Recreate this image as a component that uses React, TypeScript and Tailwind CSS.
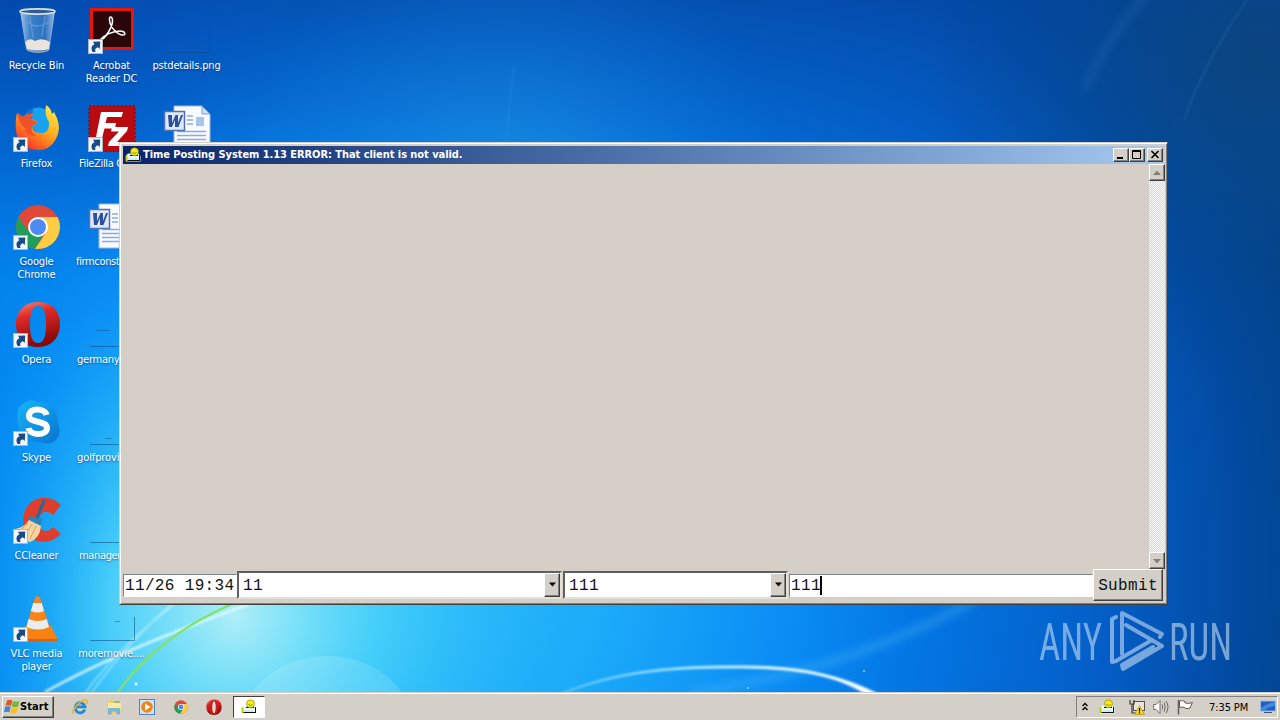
import React from "react";

type KidProps = { children: React.ReactNode };

const Shortcut = () => (
  <svg className="absolute bottom-0 left-0 h-[15px] w-[15px]" viewBox="0 0 15 15">
    <rect x="0.5" y="0.5" width="14" height="14" fill="#f2f6fb" stroke="#a9b8c6" />
    <path d="M4.700 13 C2.500 9.500 3.500 6.500 6.500 5.300 L5 2.800 L12.200 2.600 L11.800 10 L9.900 8.200 C7.500 8.800 6.500 10.500 7.500 13 Z" fill="#174a86" />
  </svg>
);

const RecycleBin = () => (
  <svg className="h-12 w-12" viewBox="0 0 48 48">
    <defs>
      <linearGradient id="bin" x1="0" x2="1">
        <stop offset="0" stopColor="#c7dcef" stopOpacity=".85" />
        <stop offset=".3" stopColor="#4f8fd0" stopOpacity=".75" />
        <stop offset=".7" stopColor="#3b7cc4" stopOpacity=".75" />
        <stop offset="1" stopColor="#b9d3ec" stopOpacity=".85" />
      </linearGradient>
    </defs>
    <path d="M7 5 H42 L36.500 44 Q25 49 13 44 Z" fill="url(#bin)" />
    <path d="M12 36 Q17 31 22 35 Q29 31 37 36 L36 43 Q25 46 14 43 Z" fill="#e9e5dc" />
    <path d="M17 10 L20 32 M32 10 L29 30 M15 16 Q23 24 36 16" stroke="#6fa3d8" strokeOpacity=".7" fill="none" strokeWidth="1.400" />
    <ellipse cx="24.500" cy="5.500" rx="17.500" ry="2.600" fill="#2f5d92" stroke="#d9dfe3" strokeWidth="1.600" />
    <path d="M14 43 Q25 48 36 43 L35.500 45 Q25 49 14.500 45Z" fill="#9aa5b0" />
  </svg>
);

const Acrobat = () => (
  <svg className="h-12 w-12" viewBox="0 0 48 48">
    <rect x="2" y="2" width="44" height="42" fill="#e8150c" />
    <rect x="5" y="5" width="38" height="36" fill="#2a0609" />
    <path d="M12 34 C17 34 25 20 24.500 14 C24 10 21 10 21.500 14 C22 22 30 29 35 29 C38.500 29 37 25 32 25 C25 25 16 29 12 34 Z" fill="none" stroke="#fff" strokeWidth="1.500" />
  </svg>
);

const Firefox = () => (
  <svg className="h-12 w-12" viewBox="0 0 48 48">
    <defs>
      <linearGradient id="foxTail" x1="0.9" y1="0" x2="0.2" y2="1">
        <stop offset="0" stopColor="#fff04a" />
        <stop offset=".45" stopColor="#ffb01e" />
        <stop offset=".75" stopColor="#ff6420" />
        <stop offset="1" stopColor="#e8243c" />
      </linearGradient>
    </defs>
    <circle cx="25" cy="19" r="16" fill="#1470d6" />
    <path d="M20 5 Q30 1 36 10 L38 24 L27 32 L18 22 Z" fill="#18a3ef" />
    <path d="M4 9 L10 13 Q15 9 20 10 L17 15 Q22 16 25 18 Q23 21 19 22 Q20 28 26 29 Q37 30 36 18 Q31 10 33 1 Q38 4 39 10 L41 8 Q48 20 45 30 Q39 47 24 46 Q5 45 3 27 Q2 16 4 9Z" fill="url(#foxTail)" />
    <path d="M4 9 L10 13 Q15 9 20 10 L17 15 L25 18 Q23 21 19 22 Q17 29 23 32 Q12 32 12 24 Q6 20 4 9Z" fill="#f0502a" />
  </svg>
);

const FileZilla = () => (
  <svg className="h-12 w-12" viewBox="0 0 48 48">
    <rect x="1" y="2" width="46" height="46" fill="#b80b10" />
    <rect x="1" y="2" width="46" height="46" fill="none" stroke="#860d16" strokeWidth="1.500" strokeDasharray="2 2" />
    <path d="M13 8 H35 L33.500 13 H19 L17.500 19 H28 L27 24.500 H16.500 L13 38 H7 Z" fill="#fff" />
    <path d="M24 23 H40 L39 27 L29 38 H38 L37 42 H20 L21 38 L31 27.500 H23 Z" fill="#fff" />
  </svg>
);

const WordDoc = () => (
  <svg className="h-12 w-12" viewBox="0 0 48 48">
    <path d="M11 2 H39 L47 10 V46 H11 Z" fill="#f8fbff" stroke="#9db6de" />
    <path d="M39 2 V10 H47 Z" fill="#cfdef5" stroke="#7d9dcf" />
    <path d="M24 12 H30 M24 16 H30 M24 20 H30 M14 27.500 H43 M14 31.500 H43 M14 35.500 H43 M14 39.500 H43" stroke="#8aaae0" strokeWidth="1.300" />
    <rect x="33" y="13" width="8" height="9" fill="#a9c4ec" />
    <rect x="1.500" y="7.500" width="20" height="19" fill="#dfe8f7" stroke="#4e6fb9" strokeWidth="1.500" />
    <path d="M5 11 H9 L9 19 L12.500 11 H15 L15 19 L18 11 H20 L15.500 23 H12 V16 L9 23 H6 Z" fill="#2c4f9e" />
  </svg>
);

const Chrome = ({ small }: { small?: boolean }) => (
  <svg className={small ? "h-[14px] w-4" : "h-12 w-12"} viewBox={small ? "2 2 46 46" : "0 0 48 48"}>
    <circle cx="25" cy="25" r="22" fill="#e0483a" />
    <path d="M5.500 15 A22 22 0 0 0 22 46.800 L32 30 L25 25 L14 28 Z" fill="#1c9f58" />
    <path d="M25 15 H44.600 A22 22 0 0 1 22 46.800 L33.500 30 Z" fill="#fdcd45" />
    <circle cx="25" cy="25" r="10" fill="#fff" />
    <circle cx="25" cy="25" r="8" fill="#4e8af4" />
  </svg>
);

const Opera = ({ small }: { small?: boolean }) => (
  <svg className={small ? "h-4 w-4" : "h-12 w-12"} viewBox={small ? "2 1 46 46" : "0 0 48 48"}>
    <defs>
      <linearGradient id="operaRed" x1="0" y1="0" x2=".3" y2="1">
        <stop offset="0" stopColor="#f98a7e" />
        <stop offset=".35" stopColor="#df2a26" />
        <stop offset="1" stopColor="#8b0808" />
      </linearGradient>
    </defs>
    <path fillRule="evenodd" d="M25 2 C39 2 47 11 47 24 C47 38 38 47 25 47 C11 47 3 38 3 24 C3 11 12 2 25 2 Z M25 6 C19 6 17 13 17 24 C17 36 19 43 25 43 C31 43 33 36 33 24 C33 13 31 6 25 6 Z" fill="url(#operaRed)" />
    {small && <path fillRule="evenodd" d="M25 4 C34 4 36 12 36 24 C36 38 34 45 25 45 C15 45 13 38 13 24 C13 12 16 4 25 4 Z M25 8 C22 8 21 13 21 24 C21 36 22 41 25 41 C28 41 29 36 29 24 C29 13 28 8 25 8 Z" fill="#c5201d" />}
    {small && <ellipse cx="25" cy="24.500" rx="4.500" ry="16.500" fill="#f3dcd8" />}
  </svg>
);

const Skype = () => (
  <svg className="h-12 w-12" viewBox="0 0 48 48">
    <defs>
      <linearGradient id="sky" x1="0" y1="0" x2="1" y2="1">
        <stop offset="0" stopColor="#16b6f8" />
        <stop offset="1" stopColor="#0873cf" />
      </linearGradient>
    </defs>
    <path d="M15 3 Q20 1 25 4 Q45 4 45 25 Q49 35 43 42 Q36 48 27 44 Q5 46 5 24 Q1 8 15 3 Z" fill="url(#sky)" />
    <path d="M33.500 17 C32 10 16 9 16 18 C16 25.500 34 22 34 30 C34 38 17 38 15.500 30" fill="none" stroke="#fff" strokeWidth="6" />
  </svg>
);

const CCleaner = () => (
  <svg className="h-12 w-12" viewBox="0 0 48 48">
    <path d="M48 9 L40 19 Q32 12 27 20 Q23 30 29 34 Q35 37 40 31 L48 38 Q38 48 24 45 Q10 39 10 24 Q11 6 27 2 Q39 0 48 9Z" fill="#df3e2c" />
    <path d="M31 5 L24 22" stroke="#1d6d9f" strokeWidth="3" strokeLinecap="round" />
    <path d="M16 20 L29 23 L27 31 L15 27 Z" fill="#2486bd" />
    <path d="M16 24 L28 30 Q27 42 17 46 L9 43 L2 33 Q11 32 16 24Z" fill="#f5d49f" />
    <path d="M19 28 L13 38 M23 30 L17 43 M15 27 L7 35" stroke="#d2a566" />
  </svg>
);

const Vlc = () => (
  <svg className="h-12 w-12" viewBox="0 0 48 48">
    <path d="M12 32 H38 L45 46 H4 Z" fill="#f98012" />
    <path d="M4 45 H45 V47 H4Z" fill="#d86406" />
    <path d="M22 4 Q24.500 0 27 4 L37 34 Q25 41 13 34 Z" fill="#fb8415" />
    <path d="M20.200 9 H28.800 L31 17 Q25 20 17.700 17 Z M15.500 25 Q25 29 33.700 25 L36 33 Q25 38 13.500 33 Z" fill="#e9edf0" />
  </svg>
);

const Thumb = ({ mark }: { mark?: string }) => (
  <svg className="h-12 w-12" viewBox="0 0 48 48">
    <path d="M2 46.500 H46.500 V23" stroke="#084a83" strokeOpacity=".55" fill="none" />
    {mark && <path d={mark} stroke="#12507f" strokeOpacity=".45" />}
  </svg>
);

const TimeIcon = ({ className }: { className: string }) => (
  <svg className={className} viewBox="0 0 16 16">
    <path d="M1 14.500 V8.500 L3 6.500 H13 L15.500 9 V14.500 Z" fill="#e6fbff" />
    <path d="M5 8.500 H13 M14.500 8 V13.500 M2 13.500 H15" stroke="#101008" />
    <path d="M3.500 12 H12.500" stroke="#8cc0d2" strokeDasharray="1 1" />
    <circle cx="9.500" cy="4.800" r="4" fill="#f4ee16" stroke="#858000" strokeWidth=".6" />
    <path d="M7.500 5.500 Q9.500 7.500 11.500 5.500" fill="none" stroke="#6b6600" strokeWidth=".8" />
    <path d="M0.500 14 V9 L2.500 7.500 V14Z" fill="#c8c90f" />
  </svg>
);

const Ie = () => (
  <svg className="h-4 w-4" viewBox="0 0 16 16">
    <path d="M12.800 10.500 A5 5 0 1 1 13 7.800 H4" fill="none" stroke="#1d8ade" strokeWidth="2.800" />
    <path d="M1.500 15 C-1 11 9 0 14.500 1 C16 1.500 15 4 14 5" fill="none" stroke="#e8b51c" strokeWidth="1.500" />
  </svg>
);

const Explorer = () => (
  <svg className="h-4 w-4" viewBox="0 0 16 16">
    <path d="M1 3 L2 1.500 H7 L8 3 H14 V14 H1Z" fill="#efcf6d" />
    <path d="M2 4 H15 V11 H2Z" fill="#fbeaa4" />
    <path d="M2.500 15 V9.500 H13.500 V15 H11 V12 H5 V15Z" fill="#78bde3" stroke="#4b95c4" strokeWidth=".5" />
    <path d="M8 3 H14" stroke="#5aa966" />
  </svg>
);

const Media = () => (
  <svg className="h-4 w-4" viewBox="0 0 16 16">
    <rect x=".5" y=".5" width="15" height="15" fill="#cfe3f8" stroke="#4f86be" />
    <circle cx="8" cy="8" r="5.800" fill="#f18317" />
    <path d="M6 4.500 L11.500 8 L6 11.500Z" fill="#fff" />
  </svg>
);

const WindowsFlag = () => (
  <svg className="h-4 w-4" viewBox="0 0 16 16">
    <path d="M3 1.500 Q5.500 0 8.300 1.500 L7 7 Q4.300 5.700 1.500 7Z" fill="#e65325" />
    <path d="M9 2 Q12 3.500 15.500 2 L14 7.700 Q11 9 7.700 7.500Z" fill="#77b53a" />
    <path d="M1.200 7.800 Q4 6.500 6.700 7.800 L5.300 13.300 Q2.700 12 0 13.300Z" fill="#3f86d2" />
    <path d="M7.500 8.400 Q10.700 10 13.800 8.500 L12.300 14 Q9.200 15.500 6 14Z" fill="#f6c02d" />
  </svg>
);

type Item = { label: string; icon: React.ReactNode; link?: boolean; pad?: string };

const columns: Item[][] = [
  [
    { label: "Recycle Bin", icon: <RecycleBin /> },
    { label: "Firefox", icon: <Firefox />, link: true },
    { label: "Google Chrome", icon: <Chrome />, link: true },
    { label: "Opera", icon: <Opera />, link: true },
    { label: "Skype", icon: <Skype />, link: true },
    { label: "CCleaner", icon: <CCleaner />, link: true },
    { label: "VLC media player", icon: <Vlc />, link: true },
  ],
  [
    { label: "Acrobat Reader DC", icon: <Acrobat />, link: true },
    { label: "FileZilla C", icon: <FileZilla />, link: true, pad: "pl-[4px] tracking-[-0.35px]" },
    { label: "firmconst", icon: <WordDoc />, pad: "pl-[1px] tracking-[-0.35px]" },
    { label: "germany", icon: <Thumb mark="M8 30.500 H22" />, pad: "pl-[2px] tracking-[-0.25px]" },
    { label: "golfprovi", icon: <Thumb mark="M17 40.500 H24" />, pad: "pl-[2px] tracking-[-0.1px]" },
    { label: "manager", icon: <Thumb />, pad: "pl-[4px] tracking-[-0.35px]" },
    { label: "moremovie....", icon: <Thumb mark="M27 27.500 H32" /> },
  ],
  [
    { label: "pstdetails.png", icon: <Thumb mark="M34 38.500 H38" /> },
    { label: "", icon: <WordDoc /> },
  ],
];

const DesktopIcon = ({ label, icon, link, pad }: Item) => (
  <div className="flex h-[98px] w-[75px] flex-col items-center">
    <div className="relative h-12 w-12">
      {icon}
      {link && <Shortcut />}
    </div>
    <div className={`mt-[5px] w-[73px] text-[11px] leading-[13px] text-white [text-shadow:0_1px_2px_rgba(0,30,90,0.6)] ${pad ? `text-left whitespace-nowrap ${pad}` : "text-center tracking-[-0.15px]"}`}>
      {label}
    </div>
  </div>
);

const Wallpaper = () => (
  <svg className="absolute inset-0 h-full w-full" viewBox="0 0 1280 720" preserveAspectRatio="none">
    <defs>
      <radialGradient id="base" gradientUnits="userSpaceOnUse" cx="400" cy="560" r="940">
        <stop offset="0" stopColor="#2fc0fa" />
        <stop offset=".22" stopColor="#1cacf9" />
        <stop offset=".42" stopColor="#0a8cf5" />
        <stop offset=".55" stopColor="#0377e4" />
        <stop offset=".75" stopColor="#045ec8" />
        <stop offset=".9" stopColor="#024aa0" />
        <stop offset="1" stopColor="#034488" />
      </radialGradient>
      <radialGradient id="glow" gradientUnits="userSpaceOnUse" cx="235" cy="615" r="350">
        <stop offset="0" stopColor="#b0eef8" />
        <stop offset=".18" stopColor="#84e6f8" stopOpacity=".9" />
        <stop offset=".4" stopColor="#4cd4fa" stopOpacity=".8" />
        <stop offset=".7" stopColor="#2dbcf9" stopOpacity=".45" />
        <stop offset="1" stopColor="#17a7f7" stopOpacity="0" />
      </radialGradient>
      <linearGradient id="leftShade" x1="0" x2="1">
        <stop offset="0" stopColor="#0088f0" stopOpacity=".65" />
        <stop offset="1" stopColor="#0098f8" stopOpacity="0" />
      </linearGradient>
      <linearGradient id="topShade" x1="0" y1="0" x2="0" y2="1">
        <stop offset="0" stopColor="#0347a4" stopOpacity=".72" />
        <stop offset="1" stopColor="#0460c4" stopOpacity="0" />
      </linearGradient>
      <radialGradient id="corner" gradientUnits="userSpaceOnUse" cx="0" cy="0" r="300">
        <stop offset="0" stopColor="#0340a6" stopOpacity=".55" />
        <stop offset="1" stopColor="#0450c8" stopOpacity="0" />
      </radialGradient>
      <radialGradient id="topRight" gradientUnits="userSpaceOnUse" cx="1260" cy="60" r="330">
        <stop offset="0" stopColor="#0d4478" stopOpacity=".8" />
        <stop offset="1" stopColor="#024490" stopOpacity="0" />
      </radialGradient>
      <radialGradient id="topGlow" gradientUnits="userSpaceOnUse" cx="510" cy="190" r="270">
        <stop offset="0" stopColor="#259de6" stopOpacity=".5" />
        <stop offset="1" stopColor="#1680dc" stopOpacity="0" />
      </radialGradient>
      <linearGradient id="arc" x1="0" x2="1">
        <stop offset="0" stopColor="#7fd6ff" stopOpacity=".6" />
        <stop offset=".55" stopColor="#c8f0ff" />
        <stop offset="1" stopColor="#ffffff" />
      </linearGradient>
      <filter id="soft"><feGaussianBlur stdDeviation="1" /></filter>
      <filter id="haze"><feGaussianBlur stdDeviation="4" /></filter>
    </defs>
    <rect width="1280" height="720" fill="url(#base)" />
    <rect width="1280" height="720" fill="url(#glow)" />
    <rect width="110" height="720" fill="url(#leftShade)" />
    <rect width="1280" height="260" fill="url(#topShade)" />
    <rect width="1280" height="720" fill="url(#topGlow)" />
    <rect width="1280" height="720" fill="url(#corner)" />
    <rect width="1280" height="720" fill="url(#topRight)" />
    <g fill="none" filter="url(#haze)">
      <path d="M1085 90 Q1105 40 1150 -10" stroke="#4a96d0" strokeOpacity=".16" strokeWidth="8" />
      <path d="M690 693 Q850 670 975 600" stroke="#4ebcfb" strokeOpacity=".4" strokeWidth="7" />
    </g>
    <g fill="none" filter="url(#soft)">
      <path d="M45 692 Q120 650 250 604" stroke="#e4fbff" strokeWidth="2.500" strokeOpacity=".85" />
      <path d="M86 692 Q120 645 180 600 M92 692 Q130 640 172 604" stroke="#c6f5ff" strokeWidth="1.300" strokeOpacity=".7" />
      <path d="M1184 120 Q1205 60 1247 0" stroke="#4a96d0" strokeOpacity=".4" />
      <path d="M514 65 L506 142" stroke="#4ca9ea" strokeOpacity=".3" />
    </g>
    <path d="M562 693 C630 665 700 666 745 666 C800 666 840 675 878 694 H866 C835 675 800 669 745 668 C700 668 630 667 564 693 Z" fill="url(#arc)" filter="url(#soft)" stroke="url(#arc)" />
    <path d="M118 692 Q158 636 232 604" stroke="#84e35e" strokeWidth="2" fill="none" />
    <ellipse cx="327" cy="728" rx="86" ry="72" fill="#fff" fillOpacity=".13" />
    <circle cx="136" cy="684" r="1.500" fill="#fff" />
    <circle cx="864" cy="671" r="1" fill="#8fd2ff" />
    <circle cx="748" cy="688" r="1" fill="#8fd2ff" />
  </svg>
);

const raised =
  "bg-[#d4d0c8] border border-t-white border-l-white border-r-[#404040] border-b-[#404040] shadow-[inset_-1px_-1px_0_#808080]";

const TitleButton = ({ children }: KidProps) => (
  <div className={`flex h-[14px] w-4 items-center justify-center ${raised}`}>
    <svg className="h-[12px] w-[14px]" viewBox="0 0 14 12" fill="none" stroke="#000">{children}</svg>
  </div>
);

const ScrollButton = ({ d }: { d: string }) => (
  <div className={`flex h-[17px] w-4 items-center justify-center ${raised}`}>
    <svg className="h-[14px] w-[14px]" viewBox="0 0 14 14"><path d={d} fill="#808080" /></svg>
  </div>
);

const Combo = ({ children, className }: KidProps & { className: string }) => (
  <div className={`-mt-px flex h-[28px] items-center border-2 border-t-[#606060] border-l-[#606060] border-r-[#e4e0d8] border-b-[#e4e0d8] bg-white ${className}`}>
    <span className="flex-1 pt-[2px] pl-[4px]">{children}</span>
    <div className={`flex h-full w-4 items-center justify-center ${raised}`}>
      <svg className="h-[5px] w-[9px]" viewBox="0 0 9 5"><path d="M1 0.500 H8 L4.500 4.500Z" fill="#000" /></svg>
    </div>
  </div>
);

const AppWindow = () => (
  <div className="absolute top-[142px] left-[119px] flex h-[463px] w-[1049px] flex-col border border-t-[#d4d0c8] border-l-[#d4d0c8] border-r-[#404040] border-b-[#404040] bg-[#d4d0c8] p-[3px] shadow-[inset_1px_1px_0_#fff,inset_-1px_-1px_0_#808080]">
    <div className="flex h-[18px] shrink-0 items-center bg-linear-to-r from-[#0a246a] to-[#a6caf0] pr-px pl-[2px]">
      <TimeIcon className="h-4 w-4" />
      <span className="ml-[2px] flex-1 pt-px text-[11px] font-bold whitespace-nowrap text-white">
        <span className="tracking-[-0.06px]">Time Posting System 1.13 ERROR: That client is not valid.</span>
      </span>
      <TitleButton><path d="M3 9 H9" strokeWidth="2" /></TitleButton>
      <TitleButton><path d="M2.500 1.500 H10.500 V9.500 H2.500 Z M2 2.500 H11" /></TitleButton>
      <div className="w-[2px]" />
      <TitleButton><path d="M3.500 2 L10.500 9 M10.500 2 L3.500 9" strokeWidth="1.600" /></TitleButton>
    </div>
    <div className="-mr-px flex min-h-0 flex-1 bg-[#d6cfc8]">
      <div className="flex-1" />
      <div className="flex w-4 flex-col justify-between bg-[repeating-conic-gradient(#ffffff_0_25%,#d8d4cd_0_50%)] bg-[size:2px_2px]">
        <ScrollButton d="M7 4.500 L11 9 H3Z" />
        <ScrollButton d="M3 5 H11 L7 9.500Z" />
      </div>
    </div>
    <div className="flex h-8 shrink-0 items-center pr-px font-['Liberation_Mono',monospace] text-[16px] tracking-[0.35px] text-[#111]">
      <div className="h-[23px] w-[114px] border border-t-[#808080] border-l-[#808080] border-r-white border-b-white bg-white pl-px leading-[22px] whitespace-nowrap">11/26 19:34</div>
      <Combo className="w-[325px]">11</Combo>
      <Combo className="ml-[1px] w-[225px]">111</Combo>
      <div className="ml-[1px] flex h-[23px] flex-1 items-center border border-t-[#808080] border-l-[#808080] border-r-white border-b-white bg-white pl-px">
        <span className="pt-[2px]">111</span><span className="-ml-px h-[19px] w-[2px] bg-black" />
      </div>
      <div className={`flex h-8 w-[70px] items-center justify-center pt-px ${raised}`}>Submit</div>
    </div>
  </div>
);

const Watermark = () => (
  <div className="absolute top-[608px] left-[1034px] flex h-[66px] w-[246px] items-center opacity-60">
    <svg className="h-full w-full" viewBox="-4 0 246 66">
      <g fill="#c6dcf5" fontFamily="Roboto" fontSize="52">
        <text x="1" y="52" textLength="63" lengthAdjust="spacingAndGlyphs">ANY</text>
        <text x="131" y="52" textLength="63" lengthAdjust="spacingAndGlyphs">RUN</text>
      </g>
      <g fill="none" stroke="#c6dcf5" strokeWidth="4" strokeLinejoin="round" strokeLinecap="round">
        <path d="M84 46 V5 L124 26 L122 29" />
        <path d="M78 9 L74 11 V54 L78 53 L114 32" />
        <path d="M88 17 L124 38 L85 61 L84 57 L115 39" />
      </g>
    </svg>
  </div>
);

const Taskbar = () => (
  <div className="relative mt-auto flex h-7 w-full items-center border-t border-[#d4d0c8] bg-[#d4d0c8] pr-[2px] pl-[2px] text-[11px] text-black shadow-[inset_0_1px_0_#fff]">
    <div className={`mt-px flex h-[22px] w-[52px] items-center pl-[1px] font-bold ${raised}`}>
      <WindowsFlag />
      <span className="pt-px tracking-[0.1px]">Start</span>
    </div>
    <div className="mt-px ml-[18px] flex items-center gap-[17.500px]">
      <Ie />
      <Explorer />
      <Media />
      <Chrome small />
      <Opera small />
    </div>
    <div className="mt-px ml-[11px] flex h-[22px] w-8 items-center justify-center border border-t-[#404040] border-l-[#404040] border-r-white border-b-white bg-white">
      <TimeIcon className="h-4 w-4" />
    </div>
    <div className="mt-px ml-auto flex h-[22px] w-[202px] items-center border border-t-[#808080] border-l-[#808080] border-r-white border-b-white">
      <svg className="ml-[4px] h-[10px] w-2" viewBox="0 0 8 10" fill="none" stroke="#000" strokeWidth="1.300"><path d="M1.500 4 L4 1.500 L6.500 4 M1.500 8 L4 5.500 L6.500 8" /></svg>
      <TimeIcon className="ml-[10px] h-4 w-4" />
      <svg className="ml-[14px] h-4 w-4" viewBox="0 0 16 16">
        <rect x="4.500" y="2.500" width="11" height="9" fill="#e8e5df" stroke="#55534e" />
        <path d="M1 1 V5 H5 V1 M3 5 V14 H7" fill="none" stroke="#3e3c38" strokeWidth="1.200" />
        <path d="M10.500 6.500 L15.500 15.500 H5.500Z" fill="#fbd21d" stroke="#ab8905" strokeWidth=".6" />
        <path d="M10.500 9 V12.500 M10.500 13.300 V14.500" stroke="#000" strokeWidth="1.200" />
      </svg>
      <svg className="ml-2 h-4 w-4" viewBox="0 0 16 16" fill="#fff" stroke="#6c6964">
        <path d="M.7 5.500 H3 L7 1.500 V14.500 L3 10.500 H.7Z" />
        <path d="M9 5.500 Q10.500 8 9 10.500 M11 3.500 Q13.500 8 11 12.500 M13 2 Q17 8 13 14" fill="none" />
      </svg>
      <svg className="ml-2 h-4 w-4" viewBox="0 0 16 16" fill="#fff" stroke="#5f5c57">
        <path d="M1.500 1 V15.500" strokeWidth="1.500" />
        <path d="M2.500 2 Q5 1 8 2.500 V4 Q12 5 15.500 3.500 Q14 6 13 9 Q10 10.500 7 8.500 Q5 7.500 2.500 8.500Z" />
      </svg>
      <span className="ml-[16px] pt-[2px] whitespace-nowrap tracking-[-0.1px]">7:35 PM</span>
      <svg className="mr-px ml-auto h-[14px] w-4" viewBox="0 0 16 14">
        <rect x=".5" y="1" width="15" height="10" fill="#245dbb" stroke="#9ab9df" />
        <path d="M1 8 Q8 3 15 2 V6 Q8 7 4 10.500 H1Z" fill="#3c8cdf" />
        <path d="M4 12.500 H12" stroke="#32547d" />
      </svg>
    </div>
  </div>
);

export default function App() {
  return (
    <div className="relative flex h-[720px] w-[1280px] flex-col overflow-hidden bg-[#0a6fd6] font-['DejaVu_Sans_Condensed','DejaVu_Sans',sans-serif] [font-stretch:condensed]">
      <Wallpaper />
      <div className="relative -ml-[1px] flex pt-[6px]">
        {columns.map((column, i) => (
          <div key={i} className="flex flex-col">
            {column.map((item, j) => <DesktopIcon key={j} {...item} />)}
          </div>
        ))}
      </div>
      <AppWindow />
      <Watermark />
      <Taskbar />
    </div>
  );
}
